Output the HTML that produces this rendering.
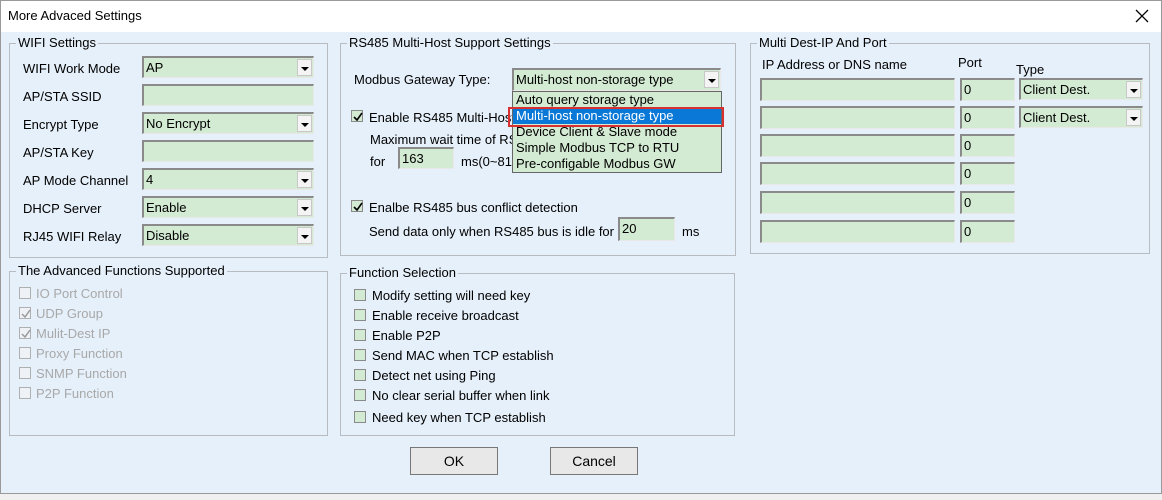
<!DOCTYPE html>
<html><head><meta charset="utf-8"><style>
*{box-sizing:border-box;margin:0;padding:0}
body{width:1162px;height:500px;background:#f0f0f0;font-family:"Liberation Sans",sans-serif;font-size:13px;color:#000;position:relative;overflow:hidden}
.win{position:absolute;left:0;top:0;width:1162px;height:494px;background:#e6f0fa}
.bord{position:absolute;left:0;top:0;width:1162px;height:494px;border:1px solid #9a9a9a;pointer-events:none}
.titlebg{position:absolute;left:0;top:0;width:1162px;height:32px;background:#fff}
.in{position:absolute;left:1px;top:1px;width:1162px;height:494px}
.a{position:absolute;white-space:nowrap}
.g{position:absolute;border:1px solid #b8bcc0}
.lg{position:absolute;top:-9px;left:6px;background:#e6f0fa;padding:0 2px;font-size:13px}
.f{position:absolute;background:#d3ead3;border-top:2px solid #8a8a8a;border-left:2px solid #8a8a8a;border-right:1px solid #e8e8e8;border-bottom:1px solid #e8e8e8;padding-left:2px;line-height:19px}
.dd{position:absolute;right:1px;top:1px;width:15px;height:17px;background:#f4f4f4;border:1px solid #c8c8c8}
.dd:after{content:"";position:absolute;left:3px;top:7px;border-left:4px solid transparent;border-right:4px solid transparent;border-top:4px solid #000}
.cb{position:absolute;width:12px;height:12px;border:1px solid #8a8a8a;background:#d3ead3}
.cb.dis{border-color:#b0b0b0;background:#eef2f6}
.cb svg{position:absolute;left:1px;top:1px}
.gr{color:#a8a8a8}
.btn{position:absolute;height:28px;background:#e8e8e8;border:1px solid #777;text-align:center;line-height:26px;font-size:14px}
</style></head><body>
<div class="win">
<div class="titlebg"></div>
<div class="in">
<span class="a" style="left:7px;top:7px;font-size:13px">More Advaced Settings</span>
<svg class="a" style="left:1134px;top:8px" width="14" height="14"><path d="M1 1L13 13M13 1L1 13" stroke="#000" stroke-width="1.3"/></svg>

<div class="g" style="left:8px;top:42px;width:319px;height:215px"><span class="lg">WIFI Settings</span></div>
<span class="a" style="left:22px;top:60px">WIFI Work Mode</span>
<span class="a" style="left:22px;top:88px">AP/STA SSID</span>
<span class="a" style="left:22px;top:116px">Encrypt Type</span>
<span class="a" style="left:22px;top:144px">AP/STA Key</span>
<span class="a" style="left:22px;top:172px">AP Mode Channel</span>
<span class="a" style="left:22px;top:200px">DHCP Server</span>
<span class="a" style="left:22px;top:228px">RJ45 WIFI Relay</span>
<div class="f" style="left:141px;top:55px;width:172px;height:22px">AP<div class="dd"></div></div>
<div class="f" style="left:141px;top:83px;width:172px;height:22px"></div>
<div class="f" style="left:141px;top:111px;width:172px;height:22px">No Encrypt<div class="dd"></div></div>
<div class="f" style="left:141px;top:139px;width:172px;height:22px"></div>
<div class="f" style="left:141px;top:167px;width:172px;height:22px">4<div class="dd"></div></div>
<div class="f" style="left:141px;top:195px;width:172px;height:22px">Enable<div class="dd"></div></div>
<div class="f" style="left:141px;top:223px;width:172px;height:22px">Disable<div class="dd"></div></div>

<div class="g" style="left:339px;top:42px;width:396px;height:213px"><span class="lg">RS485 Multi-Host Support Settings</span></div>
<span class="a" style="left:353px;top:71px">Modbus Gateway Type:</span>
<div class="f" style="left:511px;top:67px;width:209px;height:23px">Multi-host non-storage type<div class="dd"></div></div>
<div class="cb" style="left:350px;top:109px"><svg width="10" height="10"><path d="M1 5L4 8L9 1" stroke="#000" stroke-width="1.6" fill="none"/></svg></div>
<span class="a" style="left:368px;top:109px">Enable RS485 Multi-Host</span>
<span class="a" style="left:369px;top:131px">Maximum wait time of RS</span>
<span class="a" style="left:369px;top:153px">for</span>
<div class="f" style="left:397px;top:146px;width:56px;height:22px">163</div>
<span class="a" style="left:460px;top:153px">ms(0~81</span>
<div class="a" style="left:511px;top:90px;width:210px;height:82px;background:#d3ead3;border:1px solid #666;line-height:16px;padding-left:3px">Auto query storage type<br><span style="display:block;margin-left:-3px;padding-left:3px;background:#0a78d7;color:#fff">Multi-host non-storage type</span>Device Client &amp; Slave mode<br>Simple Modbus TCP to RTU<br>Pre-configable Modbus GW</div>
<div class="a" style="left:507px;top:106px;width:216px;height:20px;border:2px solid #d83030"></div>
<div class="cb" style="left:350px;top:199px"><svg width="10" height="10"><path d="M1 5L4 8L9 1" stroke="#000" stroke-width="1.6" fill="none"/></svg></div>
<span class="a" style="left:368px;top:199px">Enalbe RS485 bus conflict detection</span>
<span class="a" style="left:368px;top:223px">Send data only when RS485 bus is idle for</span>
<div class="f" style="left:617px;top:216px;width:57px;height:24px">20</div>
<span class="a" style="left:681px;top:223px">ms</span>

<div class="g" style="left:749px;top:42px;width:400px;height:211px"><span class="lg">Multi Dest-IP And Port</span></div>
<span class="a" style="left:761px;top:56px">IP Address or DNS name</span>
<span class="a" style="left:957px;top:54px">Port</span>
<span class="a" style="left:1015px;top:61px">Type</span>
<div class="f" style="left:759px;top:77px;width:195px;height:23px"></div><div class="f" style="left:959px;top:77px;width:55px;height:23px">0</div>
<div class="f" style="left:1018px;top:77px;width:124px;height:22px">Client Dest.<div class="dd"></div></div>
<div class="f" style="left:759px;top:105px;width:195px;height:23px"></div><div class="f" style="left:959px;top:105px;width:55px;height:23px">0</div>
<div class="f" style="left:1018px;top:105px;width:124px;height:22px">Client Dest.<div class="dd"></div></div>
<div class="f" style="left:759px;top:133px;width:195px;height:23px"></div><div class="f" style="left:959px;top:133px;width:55px;height:23px">0</div>
<div class="f" style="left:759px;top:161px;width:195px;height:23px"></div><div class="f" style="left:959px;top:161px;width:55px;height:23px">0</div>
<div class="f" style="left:759px;top:190px;width:195px;height:23px"></div><div class="f" style="left:959px;top:190px;width:55px;height:23px">0</div>
<div class="f" style="left:759px;top:219px;width:195px;height:23px"></div><div class="f" style="left:959px;top:219px;width:55px;height:23px">0</div>

<div class="g" style="left:8px;top:270px;width:319px;height:165px"><span class="lg">The Advanced Functions Supported</span></div>
<div class="cb dis" style="left:18px;top:286px"></div><span class="a gr" style="left:35px;top:285px">IO Port Control</span>
<div class="cb dis" style="left:18px;top:306px"><svg width="10" height="10"><path d="M1 5L4 8L9 1" stroke="#999" stroke-width="1.5" fill="none"/></svg></div><span class="a gr" style="left:35px;top:305px">UDP Group</span>
<div class="cb dis" style="left:18px;top:326px"><svg width="10" height="10"><path d="M1 5L4 8L9 1" stroke="#999" stroke-width="1.5" fill="none"/></svg></div><span class="a gr" style="left:35px;top:325px">Mulit-Dest IP</span>
<div class="cb dis" style="left:18px;top:346px"></div><span class="a gr" style="left:35px;top:345px">Proxy Function</span>
<div class="cb dis" style="left:18px;top:366px"></div><span class="a gr" style="left:35px;top:365px">SNMP Function</span>
<div class="cb dis" style="left:18px;top:386px"></div><span class="a gr" style="left:35px;top:385px">P2P Function</span>

<div class="g" style="left:339px;top:272px;width:395px;height:163px"><span class="lg">Function Selection</span></div>
<div class="cb" style="left:353px;top:288px"></div><span class="a" style="left:371px;top:287px">Modify setting will need key</span>
<div class="cb" style="left:353px;top:308px"></div><span class="a" style="left:371px;top:307px">Enable receive broadcast</span>
<div class="cb" style="left:353px;top:328px"></div><span class="a" style="left:371px;top:327px">Enable P2P</span>
<div class="cb" style="left:353px;top:348px"></div><span class="a" style="left:371px;top:347px">Send MAC when TCP establish</span>
<div class="cb" style="left:353px;top:368px"></div><span class="a" style="left:371px;top:367px">Detect net using Ping</span>
<div class="cb" style="left:353px;top:388px"></div><span class="a" style="left:371px;top:387px">No clear serial buffer when link</span>
<div class="cb" style="left:353px;top:410px"></div><span class="a" style="left:371px;top:409px">Need key when TCP establish</span>

<div class="btn" style="left:409px;top:446px;width:88px">OK</div>
<div class="btn" style="left:549px;top:446px;width:88px">Cancel</div>
</div>
<div class="bord"></div>
</div>
</body></html>
